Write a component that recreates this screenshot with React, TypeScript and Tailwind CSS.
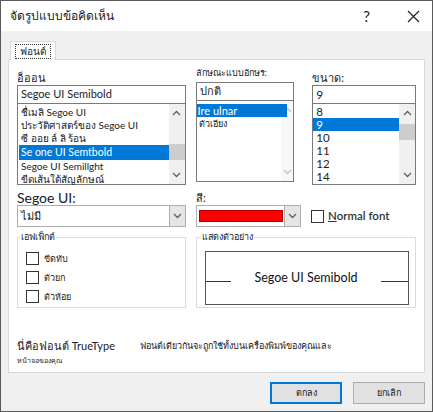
import React from "react";

const fontItems = [
  { label: "ชื่เมลิ Segoe UI", selected: false },
  { label: "ประวัติศาสตร์ของ Segoe UI", selected: false },
  { label: "ซี ออย ล์ ลิ ร้อน", selected: false },
  { label: "Se one UI Semtbold", selected: true },
  { label: "Segoe UI Semillght", selected: false },
  { label: "ขีดเส้นใต้สัญลักษณ์", selected: false },
];

const sizes = ["8", "9", "10", "11", "12", "14"];

const effects = ["ขีดทับ", "ตัวยก", "ตัวห้อย"];

const ChevronUp = ({ muted }: { muted?: boolean }) => (
  <svg width="9" height="6" viewBox="0 0 9 6" fill="none">
    <path d="M1 5L4.5 1.5L8 5" stroke={muted ? "#c4c4c4" : "#606060"} strokeWidth="1.3" />
  </svg>
);

const ChevronDown = ({ muted }: { muted?: boolean }) => (
  <svg width="9" height="6" viewBox="0 0 9 6" fill="none">
    <path d="M1 1L4.5 4.5L8 1" stroke={muted ? "#c4c4c4" : "#606060"} strokeWidth="1.3" />
  </svg>
);

const ScrollBar = ({ thumbTop, muted }: { thumbTop?: number; muted?: boolean }) => (
  <div className="w-[16px] h-full bg-[#f0f0f0] flex flex-col items-center justify-between py-[6px] relative">
    <ChevronUp muted={muted} />
    {thumbTop !== undefined && (
      <div className="absolute left-0 w-[16px] h-[16px] bg-[#cdcdcd]" style={{ top: thumbTop }} />
    )}
    <ChevronDown muted={muted} />
  </div>
);

const Checkbox = () => (
  <div className="w-[13px] h-[13px] border border-[#333] bg-white shrink-0" />
);

export default function App() {
  return (
    <div
      className="w-[433px] h-[412px] flex flex-col bg-[#f0f0f0] border border-[#5a5a5a] text-[#1a1a1a] overflow-hidden"
      style={{ fontFamily: 'Lato, "Noto Sans", sans-serif' }}
    >
      {/* title bar */}
      <div className="h-[30px] bg-white flex items-center pl-[9px] pr-[12px] shrink-0">
        <span className="text-[12px]">จัดรูปแบบข้อคิดเห็น</span>
        <span className="ml-auto text-[15px] mr-[37px]">?</span>
        <svg width="13" height="13" viewBox="0 0 13 13">
          <path d="M1 1L12 12M12 1L1 12" stroke="#222" strokeWidth="1.2" />
        </svg>
      </div>

      <div className="flex-1 flex flex-col px-[7px] pt-[9px]">
        {/* tab strip */}
        <div className="h-[19px] flex items-end pl-[2px]">
          <div className="h-[19px] w-[46px] bg-white border border-b-0 border-[#d9d9d9] flex items-center justify-center relative z-10 -mb-px">
            <span className="text-[10px] px-[4px] leading-[13px] outline outline-1 outline-dotted outline-[#333]">
              ฟอนต์
            </span>
          </div>
        </div>

        {/* tab panel */}
        <div className="h-[314px] bg-white border border-[#d9d9d9] flex flex-col pl-[8px] pr-[8px] pt-[10px]">
          <div className="flex">
            {/* font */}
            <div className="w-[169px] flex flex-col">
              <div className="h-[15px] flex items-end text-[11px] leading-[14px]">อ็ออน</div>
              <div className="h-[19px] border border-[#7a7a7a] flex items-center px-[3px] text-[11px] text-[#222]">
                Segoe UI Semibold
              </div>
              <div className="h-[81px] border border-t-0 border-[#7a7a7a] flex">
                <div className="flex-1 flex flex-col pt-[2px] pl-[1px] text-[10px] text-[#222]">
                  {fontItems.map((f) => (
                    <div
                      key={f.label}
                      className={`px-[2px] whitespace-nowrap ${
                        f.selected
                          ? "bg-[#0078d7] text-white h-[15px] leading-[15px] text-[10.5px]"
                          : "h-[13px] leading-[13px]"
                      }`}
                    >
                      {f.label}
                    </div>
                  ))}
                </div>
                <ScrollBar thumbTop={40} />
              </div>
            </div>

            {/* style */}
            <div className="w-[99px] ml-[10px] flex flex-col">
              <div className="h-[15px] flex items-start text-[9px] leading-[12px] -mt-[3px]">ลักษณะแบบอักษร:</div>
              <div className="h-[19px] border border-[#7a7a7a] flex items-center px-[3px] text-[11px]">ปกติ</div>
              <div className="h-[81px] border border-t-0 border-[#7a7a7a] flex">
                <div className="flex-1 flex flex-col pt-[3px] text-[11px]">
                  <div className="h-[13px] leading-[13px] bg-[#0078d7] text-white pl-[1px] mr-[-6px] relative z-10">
                    Ire ulnar
                  </div>
                  <div className="h-[13px] pl-[2px] text-[9px] leading-[14px]">ตัวเอียง</div>
                </div>
                <div className="w-[12px] h-full bg-[#f7f7f7] flex flex-col items-center justify-between py-[6px]">
                  <ChevronUp muted />
                  <ChevronDown muted />
                </div>
              </div>
            </div>

            {/* size */}
            <div className="w-[104px] ml-[18px] flex flex-col">
              <div className="h-[15px] flex items-end text-[11px] leading-[14px]">ขนาด:</div>
              <div className="h-[19px] border border-[#7a7a7a] flex items-center px-[3px] text-[12px]">9</div>
              <div className="h-[81px] border border-t-0 border-[#7a7a7a] flex">
                <div className="flex-1 flex flex-col pt-[1px] text-[11.5px] text-[#222]">
                  {sizes.map((s) => (
                    <div
                      key={s}
                      className={`h-[13px] leading-[13px] pl-[3px] ${
                        s === "9" ? "bg-[#0078d7] text-white" : ""
                      }`}
                    >
                      {s}
                    </div>
                  ))}
                </div>
                <ScrollBar thumbTop={20} />
              </div>
            </div>
          </div>

          {/* underline / colour row */}
          <div className="flex mt-[6px]">
            <div className="w-[169px] flex flex-col">
              <div className="h-[13px] text-[14px] leading-[13px]">Segoe UI:</div>
              <div className="h-[22px] border border-[#adadad] flex items-center mt-[1px]">
                <span className="flex-1 px-[3px] text-[11px]">ไม่มี</span>
                <div className="w-[16px] h-full bg-[#e5e5e5] border-l border-[#adadad] flex items-center justify-center">
                  <ChevronDown />
                </div>
              </div>
            </div>
            <div className="w-[105px] ml-[10px] flex flex-col">
              <div className="h-[13px] text-[11px] leading-[13px]">สี:</div>
              <div className="h-[22px] border border-[#adadad] flex items-center mt-[1px]">
                <div className="flex-1 h-full flex items-center pl-[2px] pr-[1px]">
                  <div className="w-full h-[12px] bg-[#ff0000] border border-[#b00000]" />
                </div>
                <div className="w-[16px] h-full bg-[#e5e5e5] border-l border-[#adadad] flex items-center justify-center">
                  <ChevronDown />
                </div>
              </div>
            </div>
            <div className="flex items-center ml-[10px] mt-[14px] gap-[4px]">
              <Checkbox />
              <span className="text-[11.5px] font-semibold text-[#333]">
                <span className="underline">N</span>ormal font
              </span>
            </div>
          </div>

          {/* effects / preview */}
          <div className="flex mt-[10px]">
            <div className="w-[169px] h-[71px] border border-[#dcdcdc] relative flex flex-col pl-[8px] pt-[14px] gap-[6px]">
              <span className="absolute -top-[8px] left-[2px] bg-white px-[1px] text-[9px] leading-[14px]">เอฟเฟ็กต์</span>
              {effects.map((e) => (
                <div key={e} className="flex items-center gap-[5px] h-[13px]">
                  <Checkbox />
                  <span className="text-[9px]">{e}</span>
                </div>
              ))}
            </div>
            <div className="w-[220px] h-[71px] ml-[10px] border border-[#dcdcdc] relative pl-[8px] pr-[6px] pt-[13px]">
              <span className="absolute -top-[8px] left-[4px] bg-white px-[1px] text-[9px] leading-[14px]">แสดงตัวอย่าง</span>
              <div className="h-[54px] border border-[#555] flex items-center">
                <div className="w-[25px] h-px bg-[#333] mt-[6px]" />
                <span className="flex-1 text-center text-[12.5px] text-[#111] whitespace-nowrap">Segoe UI Semibold</span>
                <div className="w-[27px] h-px bg-[#333] mt-[6px]" />
              </div>
            </div>
          </div>

          {/* font info */}
          <div className="mt-[31px] flex flex-col">
            <div className="flex items-center h-[14px]">
              <span className="w-[123px] text-[11px] text-[#222]">นี่คือฟอนต์ TrueType</span>
              <span className="text-[9px]">ฟอนต์เดียวกันจะถูกใช้ทั้งบนเครื่องพิมพ์ของคุณและ</span>
            </div>
            <span className="text-[7px] leading-[12px] mt-[1px]">หน้าจอของคุณ</span>
          </div>
        </div>

        {/* dialog buttons */}
        <div className="flex justify-end gap-[11px] mt-[9px]">
          <button className="w-[72px] h-[22px] bg-[#e1e1e1] border-2 border-[#0078d7] text-[9px]">ตกลง</button>
          <button className="w-[72px] h-[22px] bg-[#e1e1e1] border border-[#adadad] text-[9px]">ยกเลิก</button>
        </div>
      </div>
    </div>
  );
}
